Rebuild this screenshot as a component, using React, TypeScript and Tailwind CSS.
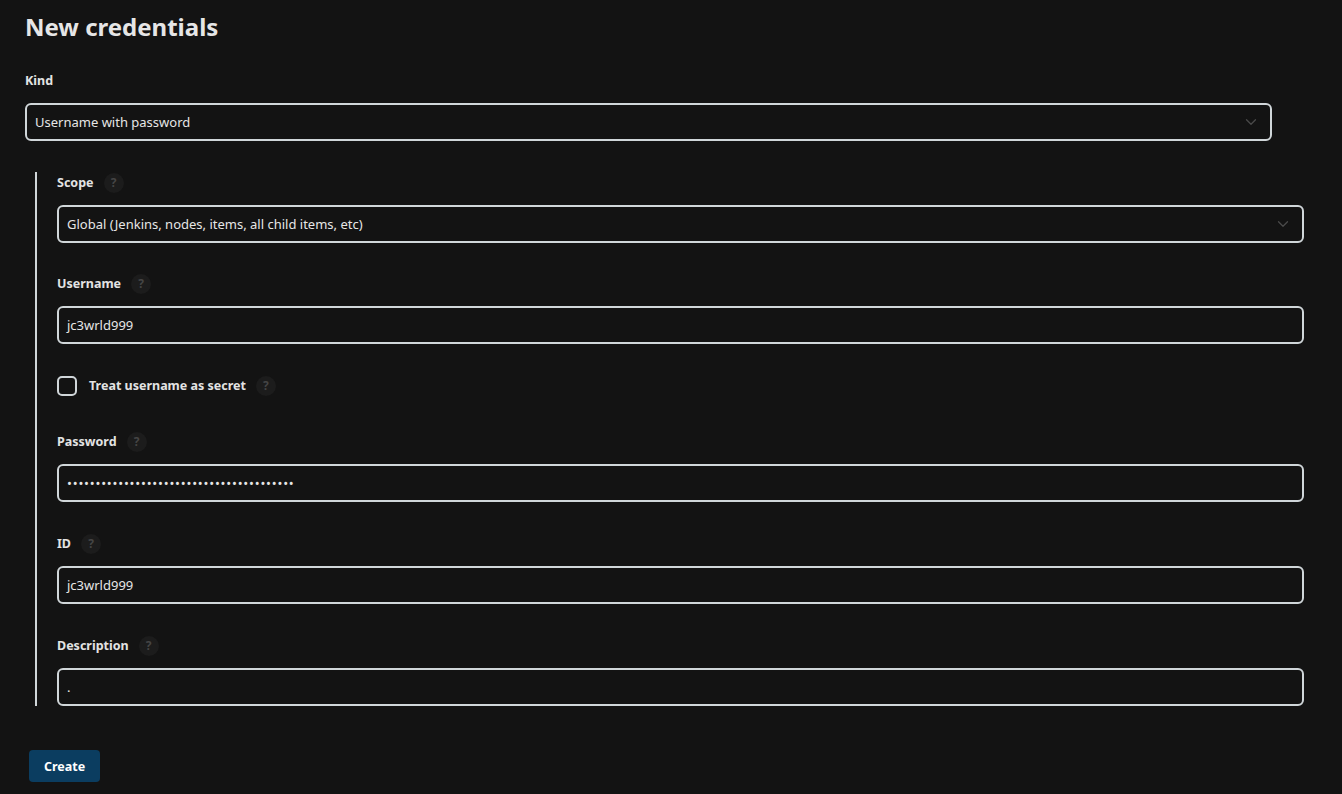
import { ChevronDown } from 'lucide-react';

const font = { fontFamily: '"Noto Sans", "Open Sans", sans-serif' };

function Help() {
  return (
    <span className="ml-[10px] flex h-5 w-5 items-center justify-center rounded-full bg-[#1c1c1c] text-[12px] font-bold text-[#454545]">
      ?
    </span>
  );
}

function Label({ text, help = true }: { text: string; help?: boolean }) {
  return (
    <div className="flex h-[22px] items-center">
      <span className="text-[12.5px] font-bold text-[#e3e3e3]">{text}</span>
      {help && <Help />}
    </div>
  );
}

function Select({ value }: { value: string }) {
  return (
    <div className="mt-[11px] flex h-[38px] items-center justify-between rounded-[6px] border-2 border-[#d0d6d9] pl-2 pr-[10px]">
      <span className="pt-[1px] text-[13px] text-[#e6e6e6]">{value}</span>
      <ChevronDown className="h-[18px] w-[18px] text-[#4a4a4a]" strokeWidth={1.75} />
    </div>
  );
}

function Input({ value, dots = false }: { value: string; dots?: boolean }) {
  return (
    <div className="mt-[11px] flex h-[38px] items-center rounded-[6px] border-2 border-[#d0d6d9] pl-2">
      <span className={dots ? 'pt-[1px] text-[13px] tracking-[0.8px] text-[#e6e6e6]' : 'pt-[1px] text-[13px] text-[#e6e6e6]'}>
        {value}
      </span>
    </div>
  );
}

export default function App() {
  return (
    <div className="min-h-[794px] bg-[#131313] pb-[12px]" style={font}>
      <div className="pl-[25px] pr-[70px] pt-[10px]">
        <h1 className="text-[24px] font-bold leading-[34px] text-[#e6e6e6]">New credentials</h1>

        <div className="mt-[26px]">
          <Label text="Kind" help={false} />
          <Select value="Username with password" />
        </div>

        <div className="mt-[31px] ml-[10px] mr-[-32px] border-l-2 border-[#d0d6d9] pl-[20px]">
          <div>
            <Label text="Scope" />
            <Select value="Global (Jenkins, nodes, items, all child items, etc)" />
          </div>

          <div className="mt-[30px]">
            <Label text="Username" />
            <Input value="jc3wrld999" />
          </div>

          <div className="mt-[32px] flex items-center">
            <span className="h-5 w-5 rounded-[5px] border-2 border-[#d0d6d9]" />
            <span className="ml-3 text-[12.5px] font-bold text-[#e3e3e3]">Treat username as secret</span>
            <Help />
          </div>

          <div className="mt-[35px]">
            <Label text="Password" />
            <Input value={'•'.repeat(40)} dots />
          </div>

          <div className="mt-[31px]">
            <Label text="ID" />
            <Input value="jc3wrld999" />
          </div>

          <div className="mt-[31px]">
            <Label text="Description" />
            <Input value="." />
          </div>
        </div>

        <button className="mt-[44px] ml-[4px] h-8 rounded-[4px] bg-[#0b3d60] px-[15px] pt-[2px] text-[12.5px] font-bold text-white">
          Create
        </button>
      </div>
    </div>
  );
}
